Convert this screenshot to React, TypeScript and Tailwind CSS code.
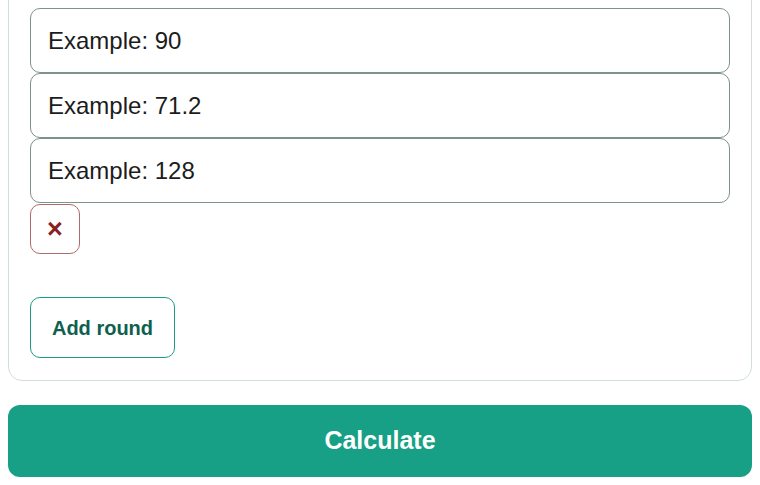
import { useState } from "react";

const initialRounds = ["Example: 90", "Example: 71.2", "Example: 128"];

export default function App() {
  const [rounds, setRounds] = useState<string[]>(initialRounds);

  return (
    <div className="w-full min-h-screen bg-white px-2 font-['Liberation_Sans',Arial,sans-serif] overflow-hidden">
      {/* Rounds card (top scrolled out of view) */}
      <div className="-mt-[30px] pt-[37px] pb-[22px] px-[21px] border border-[#d3dedb] rounded-[14px] bg-white">
        <div className="flex flex-col">
          {rounds.map((r, i) => (
            <input
              key={i}
              type="text"
              value={r}
              onChange={(e) =>
                setRounds(rounds.map((v, j) => (j === i ? e.target.value : v)))
              }
              className="h-[65px] w-full px-[17px] text-[24px] text-[#1c1c1c] border-[1.5px] border-[#7d918d] rounded-[10px] bg-white outline-none"
            />
          ))}
        </div>
        <button
          onClick={() => setRounds(rounds.slice(0, -1))}
          className="mt-[1px] w-[50px] h-[50px] flex items-center justify-center border-[1.5px] border-[#b06a6a] rounded-[10px] text-[#8a1f1f] text-[27px] font-bold leading-none"
        >
          ×
        </button>
        <button
          onClick={() => setRounds([...rounds, ""])}
          className="mt-[43px] w-[145px] h-[61px] border-[1.5px] border-[#1a9d82] rounded-[10px] text-[#0e5f50] text-[20px] font-bold"
        >
          Add round
        </button>
      </div>

      {/* Calculate */}
      <button className="mt-[24px] w-full h-[72px] bg-[#17a085] rounded-[12px] text-white text-[25px] font-bold">
        Calculate
      </button>
    </div>
  );
}
